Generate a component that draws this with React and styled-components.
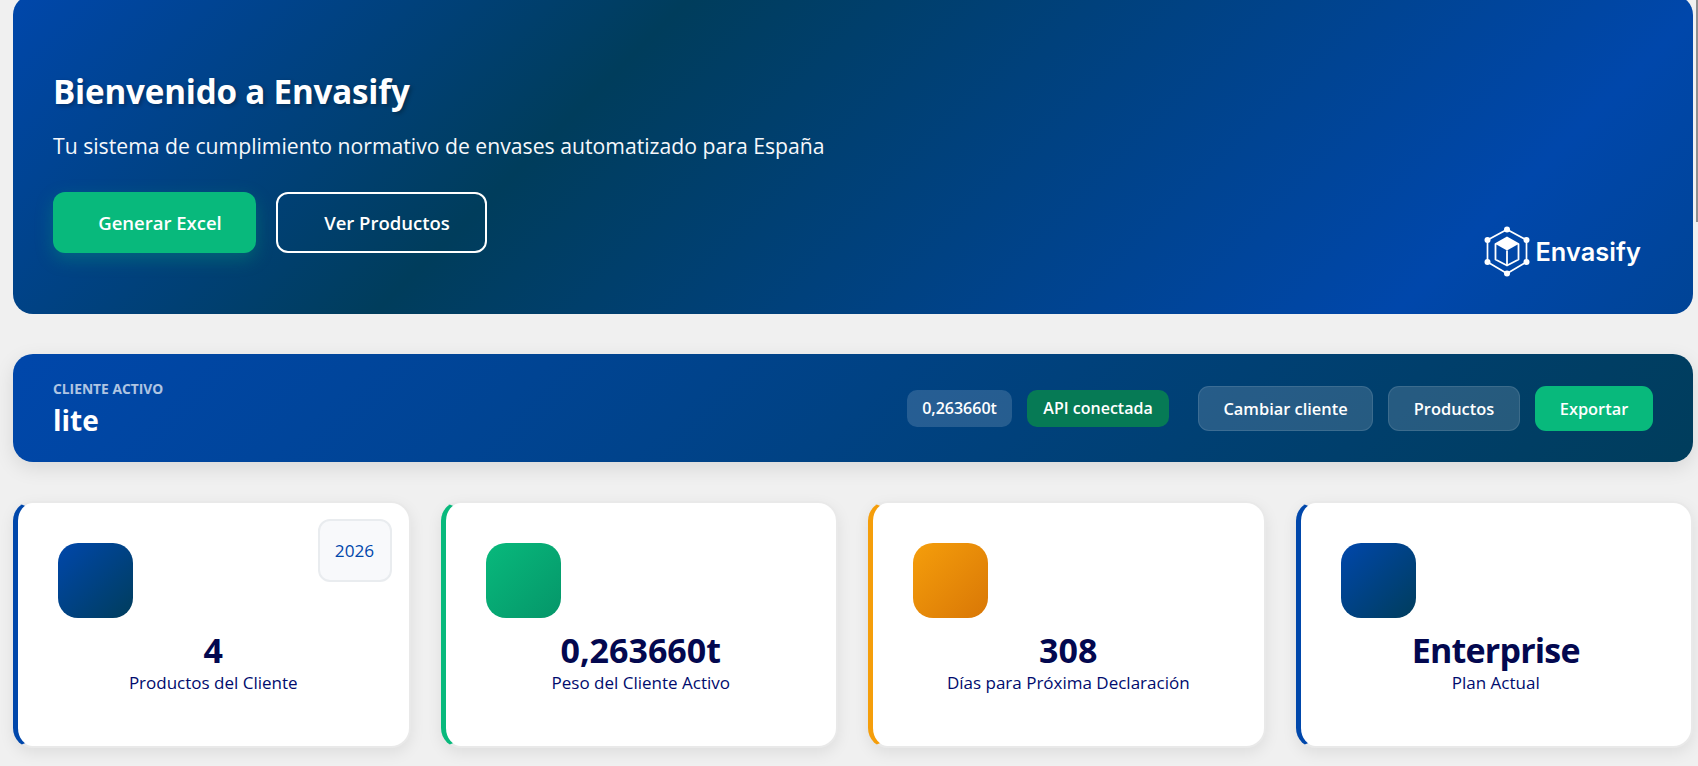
import styled, { createGlobalStyle } from "styled-components";

const GlobalStyle = createGlobalStyle`
  html, body {
    margin: 0;
    height: 766px;
    overflow: hidden;
    background: #f0f0f0;
    font-family: "Open Sans", "Noto Sans", sans-serif;
  }
  * {
    box-sizing: border-box;
  }
`;

const Page = styled.main`
  margin-top: -5px;
  padding: 0 5px 0 13px;
`;

const ScrollThumb = styled.div`
  position: fixed;
  top: 0;
  right: 0;
  width: 2.5px;
  height: 222px;
  background: #8f8f8f;
`;

const Hero = styled.section`
  position: relative;
  height: 319px;
  padding: 77px 40px 0;
  border-radius: 20px;
  color: #fff;
  background: linear-gradient(
    135deg,
    #0047ab 0%,
    #003d5c 34%,
    #0047ab 85%,
    #004496 100%
  );
`;

const HeroTitle = styled.h1`
  margin: 0;
  font-size: 33.2px;
  line-height: 1.2;
  font-weight: 700;
  letter-spacing: -0.2px;
  text-shadow: 2px 2px 4px rgba(0, 0, 0, 0.3);
`;

const HeroText = styled.p`
  margin: 19.5px 0 0;
  font-size: 21.2px;
  line-height: 1.4;
  color: #f6f8fb;
`;

const HeroActions = styled.div`
  display: flex;
  gap: 20px;
  margin-top: 31px;
`;

const HeroButton = styled.button`
  width: ${({ $width }) => $width}px;
  height: 61px;
  padding: 0 0 0 11px;
  border-radius: 12px;
  border: ${({ $outline }) => ($outline ? "2px solid #fff" : "none")};
  background: ${({ $outline }) => ($outline ? "transparent" : "#08b97c")};
  box-shadow: ${({ $outline }) =>
    $outline ? "none" : "0 6px 18px rgba(8, 185, 124, 0.3)"};
  color: #fff;
  font-family: inherit;
  font-size: 18.5px;
  font-weight: 600;
`;

const Brand = styled.div`
  position: absolute;
  right: 52px;
  bottom: 36px;
  display: flex;
  align-items: center;
  gap: 4px;
  font-family: Inter, sans-serif;
  font-size: 25.3px;
  font-weight: 600;
  letter-spacing: 0.1px;
`;

const ClientBar = styled.section`
  display: flex;
  align-items: center;
  justify-content: space-between;
  height: 108px;
  margin-top: 40px;
  padding: 0 40px;
  border-radius: 20px;
  color: #fff;
  background: linear-gradient(135deg, #0047ab 0%, #003d5c 100%);
  box-shadow: 0 6px 20px rgba(0, 0, 0, 0.1);
`;

const ClientInfo = styled.div`
  padding-top: 3px;
`;

const ClientLabel = styled.div`
  font-size: 13.8px;
  line-height: 16px;
  font-weight: 700;
  color: rgba(255, 255, 255, 0.7);
`;

const ClientName = styled.div`
  margin-top: 5px;
  font-size: 28px;
  line-height: 36px;
  font-weight: 700;
`;

const ClientTools = styled.div`
  display: flex;
  align-items: center;
  gap: 29px;
`;

const ToolGroup = styled.div`
  display: flex;
  align-items: center;
  gap: 15px;
`;

const Pill = styled.span`
  display: flex;
  align-items: center;
  justify-content: center;
  width: ${({ $width }) => $width}px;
  height: 37px;
  border-radius: 10px;
  background: ${({ $ok }) => ($ok ? "#067a55" : "rgba(255, 255, 255, 0.15)")};
  font-size: 16px;
  font-weight: 600;
`;

const BarButton = styled.button`
  width: ${({ $width }) => $width}px;
  height: 45px;
  padding: 0;
  border-radius: 11px;
  border: ${({ $primary }) =>
    $primary ? "none" : "1px solid rgba(255, 255, 255, 0.1)"};
  background: ${({ $primary }) =>
    $primary ? "#08b97c" : "rgba(255, 255, 255, 0.15)"};
  color: #fff;
  font-family: inherit;
  font-size: 16.4px;
  font-weight: 600;
`;

const CardGrid = styled.section`
  display: grid;
  grid-template-columns: repeat(4, 1fr);
  gap: 30px;
  margin-top: 39px;
`;

const Card = styled.article`
  position: relative;
  height: 247px;
  padding: 40px 40px 0;
  border: 2px solid #e9e9e9;
  border-left: 5px solid ${({ $accent }) => $accent};
  border-radius: 20px;
  background: #fff;
  box-shadow: 0 5px 15px rgba(0, 0, 0, 0.08);
  text-align: center;
`;

const YearBadge = styled.div`
  position: absolute;
  top: 16px;
  right: 17px;
  display: flex;
  align-items: center;
  justify-content: center;
  width: 74px;
  height: 63px;
  border: 2px solid #e9ecef;
  border-radius: 12px;
  background: #f8f9fb;
  color: #0047ab;
  font-size: 17.2px;
  font-weight: 500;
`;

const CardIcon = styled.div`
  width: 75px;
  height: 75px;
  border-radius: 20px;
  background: linear-gradient(135deg, ${({ $from }) => $from}, ${({ $to }) => $to});
`;

const CardValue = styled.div`
  margin-top: 12px;
  font-size: 34px;
  line-height: 40px;
  font-weight: 700;
  letter-spacing: ${({ $tight }) => ($tight ? "-0.8px" : "0")};
  color: #03084f;
`;

const CardLabel = styled.div`
  margin-top: 2px;
  font-size: 17px;
  line-height: 1.3;
  font-weight: 500;
  color: #000b6e;
`;

const stats = [
  { value: "4", label: "Productos del Cliente", accent: "#0047ab", from: "#0047ab", to: "#003d5c", year: "2026" },
  { value: "0,263660t", label: "Peso del Cliente Activo", accent: "#08b97c", from: "#08b97c", to: "#059669" },
  { value: "308", label: "Días para Próxima Declaración", accent: "#f59e0b", from: "#f59e0b", to: "#d97706" },
  { value: "Enterprise", label: "Plan Actual", accent: "#0047ab", from: "#0047ab", to: "#003d5c", tight: true },
];

function BrandMark() {
  const nodes = [
    [24, 4.5],
    [43.5, 15],
    [43.5, 37],
    [24, 48.5],
    [4.5, 37],
    [4.5, 15],
  ];
  return (
    <svg width="48" height="53" viewBox="0 0 48 53" fill="none">
      <polygon
        points={nodes.map((n) => n.join(",")).join(" ")}
        stroke="#fff"
        strokeWidth="1.7"
      />
      {nodes.map(([x, y]) => (
        <circle key={`${x}-${y}`} cx={x} cy={y} r="3" fill="#fff" />
      ))}
      <path
        d="M24 12.5 35.5 19v15.5L24 40.5 12.5 34.5V19Z"
        stroke="#fff"
        strokeWidth="1.8"
        strokeLinejoin="round"
      />
      <path d="M24 12.5 35.5 19 24 25.5 12.5 19Z" fill="#fff" />
      <path d="M24 25.5v15" stroke="#fff" strokeWidth="1.8" />
    </svg>
  );
}

function App() {
  return (
    <Page>
      <GlobalStyle />
      <ScrollThumb />
      <Hero>
        <HeroTitle>Bienvenido a Envasify</HeroTitle>
        <HeroText>
          Tu sistema de cumplimiento normativo de envases automatizado para España
        </HeroText>
        <HeroActions>
          <HeroButton $width={203}>Generar Excel</HeroButton>
          <HeroButton $width={211} $outline>
            Ver Productos
          </HeroButton>
        </HeroActions>
        <Brand>
          <BrandMark />
          Envasify
        </Brand>
      </Hero>

      <ClientBar>
        <ClientInfo>
          <ClientLabel>CLIENTE ACTIVO</ClientLabel>
          <ClientName>lite</ClientName>
        </ClientInfo>
        <ClientTools>
          <ToolGroup>
            <Pill $width={105}>0,263660t</Pill>
            <Pill $width={142} $ok>
              API conectada
            </Pill>
          </ToolGroup>
          <ToolGroup>
            <BarButton $width={175}>Cambiar cliente</BarButton>
            <BarButton $width={132}>Productos</BarButton>
            <BarButton $width={118} $primary>
              Exportar
            </BarButton>
          </ToolGroup>
        </ClientTools>
      </ClientBar>

      <CardGrid>
        {stats.map((s) => (
          <Card key={s.label} $accent={s.accent}>
            {s.year && <YearBadge>{s.year}</YearBadge>}
            <CardIcon $from={s.from} $to={s.to} />
            <CardValue $tight={s.tight}>{s.value}</CardValue>
            <CardLabel>{s.label}</CardLabel>
          </Card>
        ))}
      </CardGrid>
    </Page>
  );
}

export default App;
